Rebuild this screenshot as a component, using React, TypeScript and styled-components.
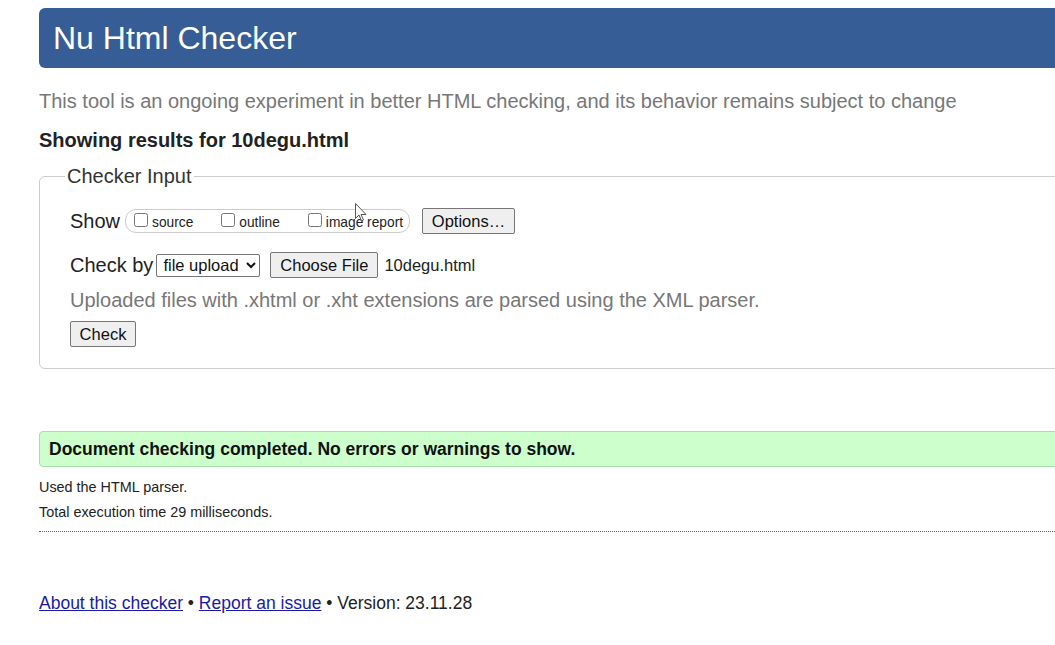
import styled, { createGlobalStyle } from "styled-components";

const GlobalStyle = createGlobalStyle`
  html, body {
    margin: 0;
    padding: 0;
    overflow: hidden;
    background: #fff;
  }
  body {
    font-family: "Liberation Sans", Arial, sans-serif;
    color: #222;
  }
`;

const Page = styled.div`
  position: relative;
  width: 1080px;
  padding: 8px 0 0 39px;
  display: flex;
  flex-direction: column;
`;

const Header = styled.h1`
  margin: 0;
  height: 60px;
  display: flex;
  align-items: center;
  padding: 0 14px;
  background: #365d95;
  border-radius: 6px;
  color: #fff;
  font-size: 32px;
  font-weight: normal;
`;

const Intro = styled.p`
  margin: 22px 0 0;
  font-size: 20px;
  line-height: 22px;
  color: #777;
`;

const Results = styled.h2`
  margin: 16px 0 0;
  font-size: 20px;
  line-height: 24px;
  font-weight: bold;
  color: #222;
`;

const Fieldset = styled.fieldset`
  margin: 13px 0 0;
  padding: 18px 30px 21px;
  border: 1px solid #ccc;
  border-radius: 6px;
  min-width: 0;
`;

const Legend = styled.legend`
  margin-left: -5px;
  padding: 0 2px;
  font-size: 20px;
  color: #333;
`;

const Row = styled.div<{ $top?: number }>`
  display: flex;
  align-items: center;
  height: 30px;
  margin-top: ${(p) => p.$top ?? 0}px;
  font-size: 20px;
  color: #222;
`;

const Pill = styled.span`
  display: inline-flex;
  align-items: center;
  height: 22px;
  margin: 0 12px 0 5px;
  padding: 0 6px 0 8px;
  gap: 28px;
  border: 1px solid #ccc;
  border-radius: 11px;
`;

const CheckLabel = styled.label`
  display: inline-flex;
  align-items: center;
  font-size: 13.75px;
  color: #222;
  padding-top: 2px;

  input {
    margin: 0 4px 4px 0;
    width: 14px;
    height: 14px;
  }
`;

const Button = styled.button<{ $w: number; $left?: number }>`
  box-sizing: border-box;
  font-family: "Liberation Sans", Arial, sans-serif;
  font-size: 16.5px;
  height: 26px;
  width: ${(p) => p.$w}px;
  margin-left: ${(p) => p.$left ?? 0}px;
  padding: 0;
  color: #111;
  background: #efefef;
  border: 1px solid #767676;
  border-radius: 2px;
`;

const Select = styled.select`
  font-family: "Liberation Sans", Arial, sans-serif;
  font-size: 16.5px;
  height: 23px;
  width: 104px;
  margin-left: 3px;
  padding: 0 2px;
  color: #111;
  background: #fff;
  border: 1px solid #767676;
  border-radius: 2px;
`;

const FileName = styled.span`
  font-size: 16.5px;
  margin-left: 6px;
`;

const Hint = styled.p`
  margin: 8px 0 0;
  font-size: 20px;
  line-height: 24px;
  color: #777;
`;

const CheckWrap = styled.div`
  display: flex;
  margin-top: 9px;
`;

const Success = styled.div`
  margin-top: 62px;
  height: 34px;
  display: flex;
  align-items: center;
  padding: 0 9px;
  background: #ccffcc;
  border: 1px solid #aaddaa;
  border-radius: 4px;
  font-size: 17.5px;
  font-weight: bold;
  color: #111;
`;

const Detail = styled.p<{ $top: number }>`
  margin: ${(p) => p.$top}px 0 0;
  font-size: 14.4px;
  line-height: 18px;
  color: #222;
`;

const Divider = styled.hr`
  margin: 10px 0 0;
  border: none;
  border-top: 1px dotted #666;
`;

const Footer = styled.p`
  margin: 60px 0 0;
  font-size: 17.5px;
  line-height: 22px;
  color: #222;

  a {
    color: #1a1aa8;
    text-decoration: underline;
  }
`;

const Cursor = styled.svg`
  position: absolute;
  left: 355px;
  top: 203px;
`;

export default function App() {
  return (
    <>
      <GlobalStyle />
      <Page>
        <Header>Nu Html Checker</Header>
        <Intro>
          This tool is an ongoing experiment in better HTML checking, and its behavior remains
          subject to change
        </Intro>
        <Results>Showing results for 10degu.html</Results>
        <Fieldset>
          <Legend>Checker Input</Legend>
          <Row>
            Show
            <Pill>
              <CheckLabel>
                <input type="checkbox" />
                source
              </CheckLabel>
              <CheckLabel>
                <input type="checkbox" />
                outline
              </CheckLabel>
              <CheckLabel>
                <input type="checkbox" />
                image report
              </CheckLabel>
            </Pill>
            <Button $w={93}>Options…</Button>
          </Row>
          <Row $top={14}>
            Check by
            <Select defaultValue="file">
              <option value="file">file upload</option>
              <option value="address">address</option>
              <option value="text">text input</option>
            </Select>
            <Button $w={108} $left={10}>
              Choose File
            </Button>
            <FileName>10degu.html</FileName>
          </Row>
          <Hint>Uploaded files with .xhtml or .xht extensions are parsed using the XML parser.</Hint>
          <CheckWrap>
            <Button $w={66}>Check</Button>
          </CheckWrap>
        </Fieldset>
        <Success>Document checking completed. No errors or warnings to show.</Success>
        <Detail $top={11}>Used the HTML parser.</Detail>
        <Detail $top={7}>Total execution time 29 milliseconds.</Detail>
        <Divider />
        <Footer>
          <a href="#about">About this checker</a> • <a href="#issue">Report an issue</a> •
          Version: 23.11.28
        </Footer>
        <Cursor width="12" height="19" viewBox="0 0 12 19">
          <path
            d="M0.5 0.5 L0.5 15.5 L4 12 L6.5 18 L8.5 17 L6 11.5 L11 11.5 Z"
            fill="#fff"
            stroke="#555"
            strokeWidth="1"
          />
        </Cursor>
      </Page>
    </>
  );
}
